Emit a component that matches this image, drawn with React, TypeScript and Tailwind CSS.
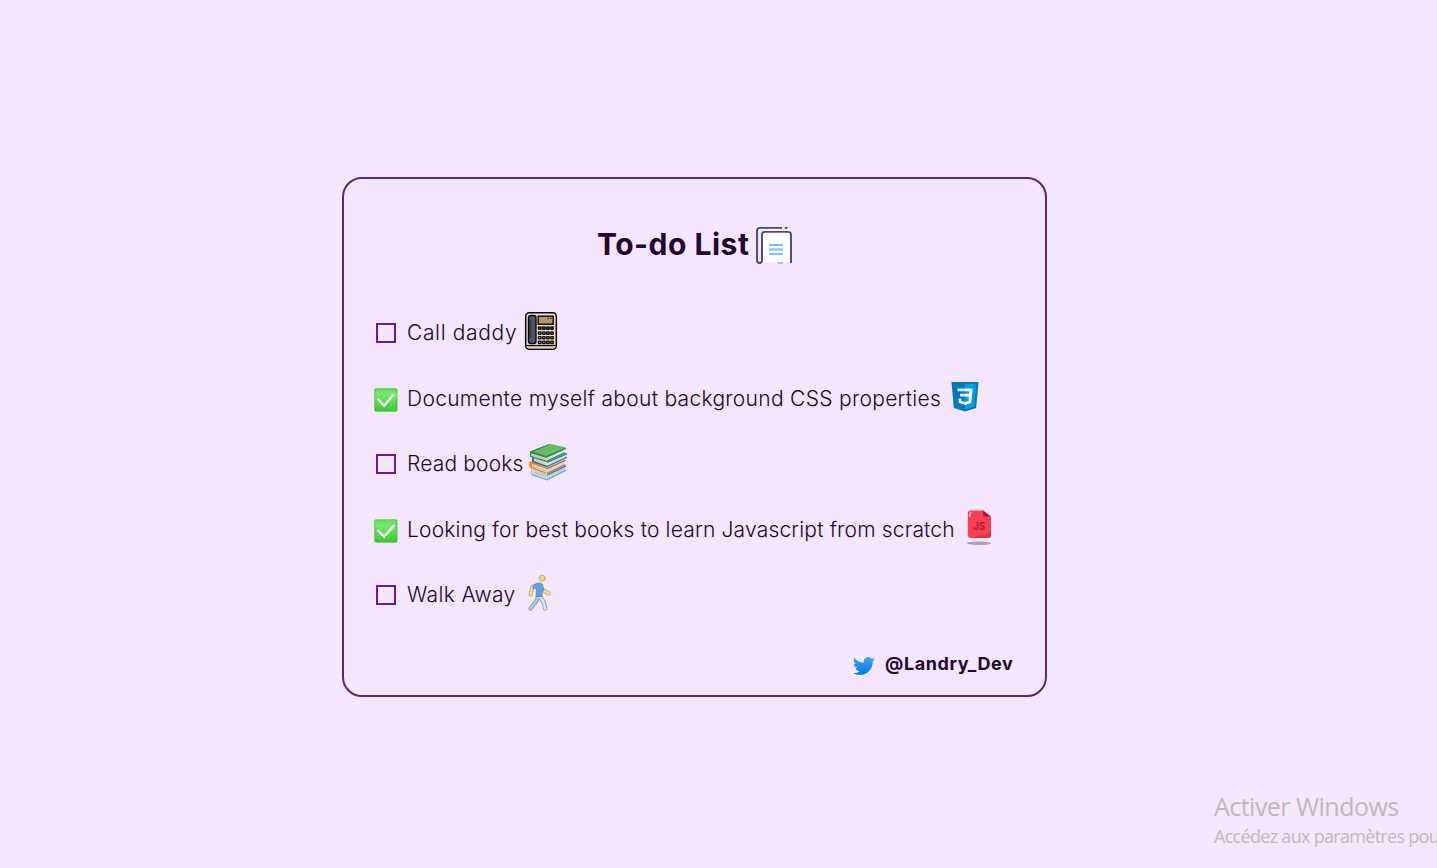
import type { ReactNode } from "react";

function NotesIcon() {
  return (
    <svg width="36" height="38" viewBox="0 0 36 38" fill="none" className="block">
      <path d="M7 6.5Q7 4 10 4H31Q35 4 35 8V36.5H6V8Q6 6 7 6Z" fill="#fcfcff" />
      <path d="M26 1.9H4Q1 1.9 1 4.9V34Q1 37 3.5 37Q6 37 6 34V9Q6 5.9 9 5.9H32Q35 5.9 35 9V37" stroke="#474e5a" strokeWidth="1.9" />
      <path d="M28.7 1.9H31.5" stroke="#474e5a" strokeWidth="1.8" />
      <path d="M13 19H27M13 23.5H27M13 28H27M22 36.8H27" stroke="#7cc4f5" strokeWidth="1.8" />
    </svg>
  );
}

function PhoneIcon() {
  return (
    <svg width="34" height="40" viewBox="0 0 34 40" className="block">
      <rect x="1.7" y="1.7" width="30.6" height="36.6" rx="3.5" fill="#eadfcd" stroke="#080808" strokeWidth="1.5" />
      <path d="M2.5 34H31.5V35Q31.5 37.5 29 37.5H5Q2.5 37.5 2.5 35Z" fill="#d3c6b1" />
      <path d="M2 34.5H32" stroke="#080808" strokeWidth="1.2" />
      <rect x="4.5" y="4.5" width="7.5" height="28" rx="2.5" fill="#4a5666" stroke="#080808" strokeWidth="1.4" />
      <path d="M6 9V27" stroke="#2a333d" strokeWidth="1.5" />
      <rect x="14.2" y="5.2" width="15" height="8" fill="#bd9270" stroke="#080808" strokeWidth="1.4" />
      <path d="M23.5 7.5H25M26 7.5H27.5" stroke="#111111" strokeWidth="1.2" />
      {[15.3, 20.3, 25, 29.6].map((y, row) =>
        [13.8, 17.9, 22, 26.1].map((x) => (
          <g key={`${x}-${y}`}>
            <rect x={x} y={y} width="3.9" height="3.6" rx="1" fill="#101010" />
            <rect x={x + 1.3} y={y + 1.2} width="1.2" height="1" fill={row === 0 ? "#52606e" : "#c79b78"} />
          </g>
        )),
      )}
    </svg>
  );
}

function CssIcon() {
  return (
    <svg width="28" height="30" viewBox="0 0 28 30" className="block">
      <path d="M.5 0H27.5L25.2 26L14 29.5L2.8 26Z" fill="#0277bd" />
      <path d="M14 2H25.3L23.3 24.6L14 27.4Z" fill="#039be5" />
      <path d="M14 6.4H21.6L20.3 21L14 23V20L17.4 18.9L17.8 14.5H14V11.7H18.1L18.3 9.3H14Z" fill="#ffffff" />
      <path d="M14 6.4V9.3H6.5L6.3 6.4ZM14 11.7V14.5H9.2L9 11.7ZM14 20V23L7.8 21L7.4 16.5H10.2L10.4 18.9Z" fill="#e5e8ec" />
    </svg>
  );
}

function BooksIcon() {
  return (
    <svg width="40" height="38" viewBox="0 0 40 38" className="block">
      <path d="M4 26L19 31L37 23V27L19 36.5L5 31Z" fill="#c9d3d1" />
      <path d="M4 26V31L19 36.5V37.5L3.5 32V26Z" fill="#55a1ec" />
      <path d="M19 36.2L38 26.6V27.9L19 37.5Z" fill="#5f9dda" />
      <path d="M19 31L38 22V23.7L19 32.8Z" fill="#397eb8" />
      <path d="M3 19.5L19 25L37 16V22L19 31L3 25Z" fill="#dbd9cf" />
      <path d="M1 19L4 18.5L19 24.5V26L4 21V24L18 29.5V31L1.5 24.5Z" fill="#f58523" />
      <path d="M19 24.8L37.5 16.5V18L19 26.5ZM19 29.8L37 21V22.3L19 31Z" fill="#c66f39" />
      <path d="M5 13L19 17.5L37 10V14.5L19 23.5L5 18.5Z" fill="#deddd1" />
      <path d="M4 14L6 14V18L19 22.8V24.2L4 19Z" fill="#246ea5" />
      <path d="M19 18L39 9.8V11.5L19 20ZM19 22.8L39 13.5V15L19 24.3Z" fill="#347db8" />
      <path d="M3 9L19 14V19L4 14Z" fill="#d6d5c7" />
      <path d="M19 14L36 6V10L19 18.5Z" fill="#dedfd2" />
      <path d="M2 8.5L22 .8L38 4.5L18 13.8Z" fill="#65bd64" />
      <path d="M2 8.5L22 .8L21 2L5 8.8L18 13V14.7L3.5 10.5V13L18 17.5V19L2 13.7ZM18 13L38 4.5V6L18 15ZM18 17.7L37 9V10.3L18 19Z" fill="#348548" />
      <path d="M5 12L17 16M7 17L17 20.5M5 23L17 27.5M6 29L17 33" stroke="#b3b2a7" strokeWidth=".6" />
    </svg>
  );
}

function JsIcon() {
  return (
    <svg width="26" height="36" viewBox="0 0 26 36" className="block">
      <ellipse cx="13" cy="33.2" rx="12" ry="1.7" fill="#aaa0b4" />
      <path d="M4.5 .5H17L25 7V25Q25 28 22 28H4.5Q1.8 28 1.8 25V3.5Q1.8 .5 4.5 .5Z" fill="#ff3e51" />
      <path d="M17 .5L25 6.5H19Q17 6.5 17 4Z" fill="#a61b35" />
      <path d="M25 20V25Q25 28 22 28H7Q9 25.5 12 26Q14 23 18 25Q23 25 25 20Z" fill="#df344a" />
      <path d="M3.8 7V4Q3.8 2.5 5.5 2.4" stroke="#ffd3d8" strokeWidth="1.3" fill="none" />
      <text x="13.2" y="20" textAnchor="middle" fontFamily="Inter, sans-serif" fontSize="10" fontWeight="700" fill="#9f2039">JS</text>
    </svg>
  );
}

function WalkIcon() {
  return (
    <svg width="26" height="38" viewBox="0 0 26 38" fill="none" strokeLinecap="round" strokeLinejoin="round" className="block">
      <path d="M11.5 21L9.5 27L3.5 34.5M12 21L16.5 28L18.3 34.5" stroke="#8297aa" strokeWidth="4.2" />
      <path d="M11.5 21L9.5 27L3.5 34.5" stroke="#aec3d4" strokeWidth="2.8" />
      <path d="M12 21L16.5 28L18.3 34.5" stroke="#d5e5ed" strokeWidth="2.8" />
      <path d="M5.5 12.5L3.5 20.5M15 15.5L21.8 19.5" stroke="#b29542" strokeWidth="4" />
      <path d="M5.5 12.5L3.5 20.5M15 15.5L21.8 19.5" stroke="#f6d992" strokeWidth="2.8" />
      <path d="M5.5 13Q7 10 10 9.2H13.5Q16.5 10 16 13L17 16L15 18L15 22.5H9L9.5 15L7.2 14.5Z" fill="#6c9ddc" stroke="#5284bd" strokeWidth=".8" />
      <circle cx="15.3" cy="4.2" r="2.9" fill="#f7dc91" stroke="#bd9b45" strokeWidth=".8" />
    </svg>
  );
}

function TwitterIcon() {
  return (
    <svg width="22" height="18" viewBox="0 0 24 19.75" className="block">
      <defs>
        <linearGradient id="bird" x1="0" y1="0" x2="0" y2="1">
          <stop stopColor="#35a6ef" />
          <stop offset="1" stopColor="#087bdd" />
        </linearGradient>
      </defs>
      <path fill="url(#bird)" d="M23.95 2.57a10 10 0 0 1-2.82.77 4.96 4.96 0 0 0 2.16-2.72 9.9 9.9 0 0 1-3.12 1.19A4.92 4.92 0 0 0 11.78 6.3 13.94 13.94 0 0 1 1.64 1.15a4.92 4.92 0 0 0 1.52 6.57 4.9 4.9 0 0 1-2.23-.61v.06a4.92 4.92 0 0 0 3.95 4.83 5 5 0 0 1-2.21.08 4.94 4.94 0 0 0 4.6 3.42A9.87 9.87 0 0 1 0 17.54a13.99 13.99 0 0 0 7.55 2.21c9.05 0 14-7.5 14-13.99 0-.21 0-.42-.02-.63a9.94 9.94 0 0 0 2.42-2.56Z" />
    </svg>
  );
}

function CheckedBox() {
  return (
    <svg width="24" height="24" viewBox="0 0 24 24" className="block">
      <defs>
        <linearGradient id="check-fill" x1="0" y1="0" x2="0" y2="1">
          <stop stopColor="#62df59" />
          <stop offset=".25" stopColor="#75e86b" />
          <stop offset="1" stopColor="#3ac930" />
        </linearGradient>
      </defs>
      <rect x=".8" y=".8" width="22.2" height="22.4" rx="1" fill="url(#check-fill)" stroke="#42bd36" strokeWidth=".8" />
      <path d="M4.2 11.5L10 17.8L19.3 7" fill="none" stroke="#ffffff" strokeWidth="2.3" strokeLinecap="round" />
    </svg>
  );
}

type Task = { label: string; done: boolean; textClass: string; icon: ReactNode; iconClass: string };

const tasks: Task[] = [
  { label: "Call daddy", done: false, textClass: "w-[110px] tracking-[0.65px]", icon: <PhoneIcon />, iconClass: "ml-[7px] mb-[4px]" },
  { label: "Documente myself about background CSS properties", done: true, textClass: "w-[534px] tracking-[0.3px]", icon: <CssIcon />, iconClass: "ml-[10px] mb-[3px]" },
  { label: "Read books", done: false, textClass: "w-[117px] tracking-[0.15px]", icon: <BooksIcon />, iconClass: "ml-[4px] mb-[4px]" },
  { label: "Looking for best books to learn Javascript from scratch", done: true, textClass: "w-[548px] tracking-[0.18px]", icon: <JsIcon />, iconClass: "ml-[11px] mb-[3px]" },
  { label: "Walk Away", done: false, textClass: "w-[108px] tracking-[0.35px]", icon: <WalkIcon />, iconClass: "ml-[12px] mb-[5px]" },
];

export default function App() {
  return (
    <main className="flex h-[868px] w-full flex-col overflow-hidden bg-[#f4e6fd] pt-[177px] font-['Inter',sans-serif] text-[#240334]">
      <section className="ml-[342px] flex h-[520px] w-[705px] shrink-0 flex-col rounded-[20px] border-2 border-[#5c2675] px-[30px]">
        <h1 className="mt-[46px] flex h-10 items-center justify-center text-[30px] font-bold leading-10">
          <span className="mb-[2px] w-[152px] whitespace-nowrap tracking-[0.5px]">To-do List</span>
          <span className="ml-[7px]"><NotesIcon /></span>
        </h1>
        <ul className="mt-[35.5px]">
          {tasks.map((task) => (
            <li key={task.label} className="flex h-[65.5px] items-center">
              <span className="flex w-6 shrink-0 items-center justify-center">
                {task.done ? <span className="mt-[2px]"><CheckedBox /></span> : <span className="mb-px size-5 border-2 border-[#661b98]" />}
              </span>
              <span className={`ml-[9px] shrink-0 whitespace-nowrap text-[21px] font-light leading-[30px] ${task.textClass}`}>{task.label}</span>
              <span className={`shrink-0 ${task.iconClass}`}>{task.icon}</span>
            </li>
          ))}
        </ul>
        <footer className="mt-[23px] flex h-7 items-center justify-end text-[18px] font-bold">
          <span className="mt-[2px]"><TwitterIcon /></span>
          <span className="mb-[3px] ml-[10px] w-[130px] whitespace-nowrap tracking-[0.6px]">@Landry_Dev</span>
        </footer>
      </section>
      <aside className="ml-[1214px] mt-[93px] whitespace-nowrap font-['Open_Sans',sans-serif] text-[#bdb8c0]">
        <p className="text-[25px] leading-[33px] tracking-[-0.53px]">Activer Windows</p>
        <p className="text-[18px] leading-[26px] tracking-[-0.7px]">Accédez aux paramètres pou</p>
      </aside>
    </main>
  );
}
